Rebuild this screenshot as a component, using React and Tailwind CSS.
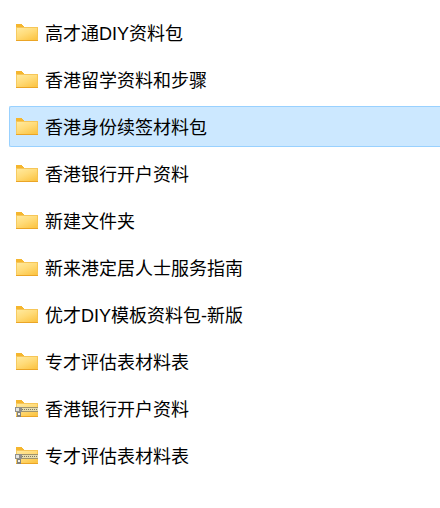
import React from "react";

const items = [
  { name: "高才通DIY资料包" },
  { name: "香港留学资料和步骤" },
  { name: "香港身份续签材料包", selected: true },
  { name: "香港银行开户资料" },
  { name: "新建文件夹" },
  { name: "新来港定居人士服务指南" },
  { name: "优才DIY模板资料包-新版" },
  { name: "专才评估表材料表" },
  { name: "香港银行开户资料", zip: true },
  { name: "专才评估表材料表", zip: true },
];

function FolderIcon({ zip }) {
  return (
    <svg width="23" height="18" viewBox="0 0 23 18" className="shrink-0 mt-px" shapeRendering="crispEdges">
      <defs>
        <linearGradient id="folderFill" x1="0" y1="0" x2="0.7" y2="1">
          <stop offset="0" stopColor="#ffeaa0" />
          <stop offset="0.5" stopColor="#ffdb78" />
          <stop offset="1" stopColor="#fcc545" />
        </linearGradient>
      </defs>
      {/* tab */}
      <path d="M1 0 H7 V1 H8 V2 H9 V3 H1 Z" fill="#f5b62e" />
      <rect x="1" y="3" width="22" height="1" fill="#f6c658" />
      {/* body */}
      <rect x="1" y="4" width="22" height="13" fill="url(#folderFill)" />
      <rect x="1" y="4" width="1" height="13" fill="#f7cb60" />
      <rect x="22" y="4" width="1" height="13" fill="#f6c452" />
      <rect x="1" y="16" width="22" height="1" fill="#eba526" />
      {zip && (
        <>
          {/* zipper band */}
          <rect x="6" y="7" width="17" height="5" fill="#a0946c" />
          <rect x="6" y="8" width="17" height="3" fill="#e6dcae" />
          {[7, 9, 11, 13, 15, 17, 19, 21].map((x) => (
            <rect key={x} x={x} y="9" width="1" height="1" fill="#7f7a60" />
          ))}
          {/* clasp */}
          <rect x="0" y="7" width="7" height="5" fill="#8f8f8b" />
          <rect x="1" y="8" width="3" height="3" fill="#e4e4e0" />
          <rect x="2" y="12" width="4" height="5" fill="#82827e" />
          <rect x="3" y="13" width="2" height="2" fill="#f2f2ee" />
        </>
      )}
    </svg>
  );
}

export default function App() {
  return (
    <div className="w-[440px] h-[508px] bg-white overflow-hidden pt-3 pl-[9px] flex flex-col gap-1.5 font-['Liberation_Sans','Noto_Sans_CJK_SC',sans-serif]">
      {items.map((item, i) => (
        <div
          key={i}
          className={
            item.selected
              ? "h-[41px] shrink-0 flex items-center gap-[7px] pl-[5px] bg-[#cce8ff] border border-r-0 border-[#99d1ff] rounded-l-[2px]"
              : "h-[41px] shrink-0 flex items-center gap-[7px] pl-[6px]"
          }
        >
          <FolderIcon zip={item.zip} />
          <span className="text-[18px] leading-none pt-0.5 text-black whitespace-nowrap">{item.name}</span>
        </div>
      ))}
    </div>
  );
}
